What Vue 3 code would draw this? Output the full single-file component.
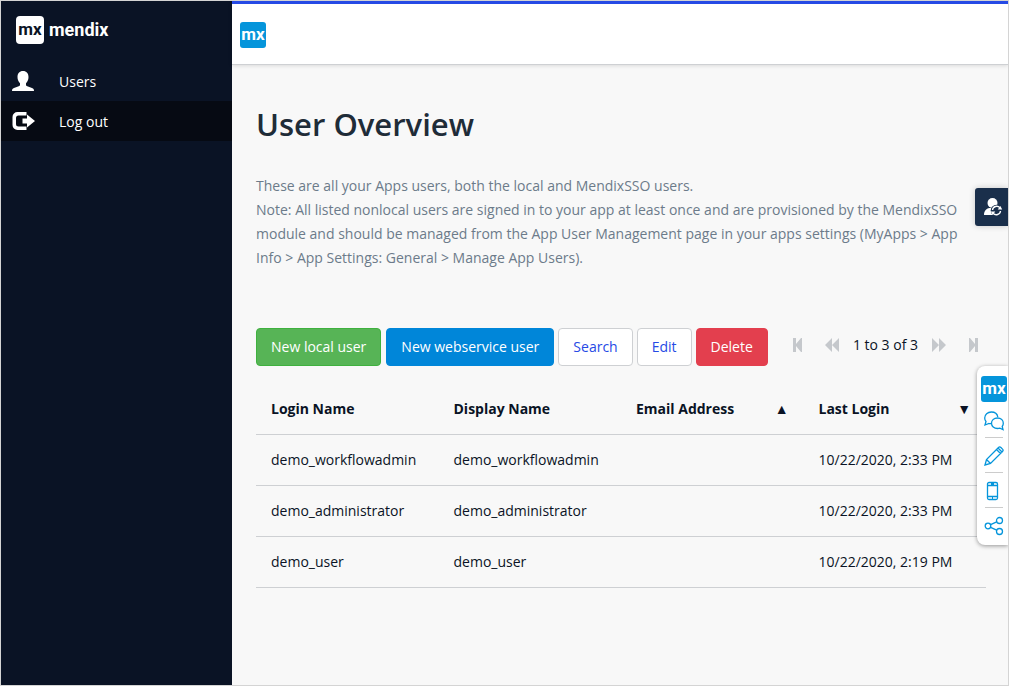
<script setup>
const columns = [
  { label: 'Login Name', sort: '' },
  { label: 'Display Name', sort: '' },
  { label: 'Email Address', sort: '▲' },
  { label: 'Last Login', sort: '▼' },
]
const users = [
  { login: 'demo_workflowadmin', name: 'demo_workflowadmin', email: '', last: '10/22/2020, 2:33 PM' },
  { login: 'demo_administrator', name: 'demo_administrator', email: '', last: '10/22/2020, 2:33 PM' },
  { login: 'demo_user', name: 'demo_user', email: '', last: '10/22/2020, 2:19 PM' },
]
</script>

<template>
  <div class="app">
    <aside class="sidebar">
      <div class="brand">
        <span class="brand-mark">mx</span>
        <span class="brand-name">mendix</span>
      </div>
      <nav>
        <a class="nav-item" href="#users">
          <svg width="22" height="20" viewBox="0 0 22 20" fill="#fff"><path d="M11 0C7.500 0 5.500 2.400 5.500 6c0 2.700 1 4.800 2.500 6.200v1.600c0 .8-.5 1.200-1.300 1.500L2 17c-1.400.5-2 1.200-2 3h22c0-1.800-.6-2.500-2-3l-4.700-1.700c-.8-.3-1.300-.7-1.300-1.500v-1.600c1.500-1.400 2.500-3.500 2.500-6.200 0-3.600-2-6-5.500-6z" /></svg>
          <span>Users</span>
        </a>
        <a class="nav-item active" href="#logout">
          <svg width="24" height="20" viewBox="0 0 24 20" fill="#fff"><path d="M14.500 1H5.500A5 5 0 0 0 .5 6v8a5 5 0 0 0 5 5h9v-3.500H6.500A2.500 2.500 0 0 1 4 13V7a2.500 2.500 0 0 1 2.500-2.500h8z" /><path d="M10.500 7.500H15V3.500L23 10l-8 6.500v-4h-4.500z" /></svg>
          <span>Log out</span>
        </a>
      </nav>
    </aside>

    <div class="page">
      <header class="topbar"><span class="mx-logo">mx</span></header>
      <main class="content">
        <h1>User Overview</h1>
        <p class="intro">
          These are all your Apps users, both the local and MendixSSO users.<br />
          Note: All listed nonlocal users are signed in to your app at least once and are provisioned by the MendixSSO
          module and should be managed from the App User Management page in your apps settings (MyApps &gt; App Info &gt;
          App Settings: General &gt; Manage App Users).
        </p>
        <div class="toolbar">
          <div class="actions">
            <button class="btn success">New local user</button>
            <button class="btn primary">New webservice user</button>
            <button class="btn">Search</button>
            <button class="btn">Edit</button>
            <button class="btn danger">Delete</button>
          </div>
          <div class="pager">
            <button aria-label="First page"><svg width="14" height="14" viewBox="0 0 14 14"><path d="M2 0h3v6l5-6h1v14h-1L5 8v6H2z" /></svg></button>
            <button aria-label="Previous page"><svg width="14" height="14" viewBox="0 0 14 14"><path d="M0 7l7-7v14zM7 7l7-7v14z" /></svg></button>
            <span>1 to 3 of 3</span>
            <button aria-label="Next page"><svg width="14" height="14" viewBox="0 0 14 14"><path d="M14 7L7 0v14zM7 7L0 0v14z" /></svg></button>
            <button aria-label="Last page"><svg width="14" height="14" viewBox="0 0 14 14"><path d="M12 0H9v6L4 0H3v14h1l5-6v6h3z" /></svg></button>
          </div>
        </div>
        <table>
          <thead>
            <tr>
              <th v-for="c in columns" :key="c.label" scope="col">
                <div class="head"><span>{{ c.label }}</span><span v-if="c.sort">{{ c.sort }}</span></div>
              </th>
            </tr>
          </thead>
          <tbody>
            <tr v-for="u in users" :key="u.login">
              <td>{{ u.login }}</td>
              <td>{{ u.name }}</td>
              <td>{{ u.email }}</td>
              <td>{{ u.last }}</td>
            </tr>
          </tbody>
        </table>
      </main>
    </div>

    <button class="switcher" aria-label="Switch user">
      <svg width="20" height="18" viewBox="0 0 20 18">
        <circle cx="8.500" cy="5" r="5" fill="#fff" />
        <path d="M0 17c0-4 2-6.500 5.500-7h5L13 17z" fill="#fff" />
        <circle cx="12.500" cy="12.500" r="5.800" fill="#1a2f4b" />
        <path d="M8.500 12a4.200 4.200 0 0 1 7.400-2.200M16.500 13a4.200 4.200 0 0 1-7.400 2.200" fill="none" stroke="#fff" stroke-width="1.400" />
        <path d="M13.700 11.500h4.500l-1.800-3.500zM11.300 13.500H6.800l1.800 3.500z" fill="#fff" />
      </svg>
    </button>

    <aside class="tools">
      <span class="mx-logo">mx</span>
      <button aria-label="Feedback">
        <svg width="20" height="20" viewBox="0 0 20 20"><path d="M7.500 12.500c-.8.200-1.800.2-2.500 0L1 14l1-3.500A5.500 5.500 0 0 1 .7 7C.7 3.500 3.600 1 7.300 1c3.400 0 6 2 6.500 5" /><path d="M13.500 7C10 7 7.500 9.300 7.500 12.200s2.500 5.300 6 5.300c.9 0 1.700-.1 2.400-.4L19 18.500l-.8-3c.7-.9 1.100-2 1.100-3.200C19.300 9.300 17 7 13.500 7z" /></svg>
      </button>
      <button aria-label="Edit app">
        <svg width="20" height="20" viewBox="0 0 20 20"><path d="M1 19l1.500-5.500L14.500 1.500c.8-.8 1.600-.8 2.400 0l1.600 1.600c.8.800.8 1.600 0 2.400L6.500 17.500zM2.500 13.500l4 4M12.500 3.500l4 4M14 2l4 4" /></svg>
      </button>
      <button aria-label="View on phone">
        <svg width="20" height="20" viewBox="0 0 20 20"><path d="M5 1.500h7a1.500 1.500 0 0 1 1.500 1.500v14a1.500 1.500 0 0 1-1.500 1.500H5A1.500 1.500 0 0 1 3.500 17V3A1.500 1.500 0 0 1 5 1.500zM3.500 4.500h10M3.500 15.500h10M7 3h3M8 17h1" /></svg>
      </button>
      <button aria-label="Share">
        <svg width="20" height="20" viewBox="0 0 20 20"><circle cx="4" cy="10" r="2.800" /><circle cx="15.500" cy="4.500" r="3" /><circle cx="15.500" cy="15.500" r="3" /><path d="M6.600 8.700l6.100-2.900M6.600 11.300l6.100 2.900" /></svg>
      </button>
    </aside>
  </div>
</template>

<style>
body {
  margin: 0;
}
</style>

<style scoped>
* {
  box-sizing: border-box;
}
.app {
  position: relative;
  display: flex;
  min-height: 100vh;
  border: 1px solid #d4d4d4;
  background: #f8f8f8;
  overflow: hidden;
  font: 14px/24px 'Open Sans', sans-serif;
  color: #0a1325;
}
button {
  font: inherit;
  cursor: pointer;
}
.sidebar {
  flex: 0 0 231px;
  background: #0a1325;
  color: #fff;
}
.brand {
  display: flex;
  align-items: center;
  gap: 5px;
  height: 60px;
  padding: 0 0 2px 15px;
  font-family: Roboto, sans-serif;
  font-weight: 700;
  font-size: 18px;
}
.brand-mark {
  width: 28px;
  height: 28px;
  border-radius: 4px;
  background: #fff;
  color: #0a1325;
  font-size: 17px;
  text-align: center;
  line-height: 26px;
}
.brand-name {
  line-height: 26px;
}
.nav-item {
  display: flex;
  align-items: center;
  height: 40px;
  padding-left: 11px;
  color: #fff;
  text-decoration: none;
}
.nav-item svg {
  margin-right: auto;
}
.nav-item span {
  width: 173px;
  padding-top: 2px;
}
.nav-item.active {
  background: #060a13;
}
.page {
  flex: 1;
  min-width: 0;
}
.topbar {
  display: flex;
  align-items: center;
  height: 64px;
  padding: 2px 0 0 8px;
  border-top: 3px solid #264ae5;
  border-bottom: 1px solid #ced0d3;
  background: #fff;
  box-shadow: 0 1px 4px rgba(0, 0, 0, 0.12);
}
.mx-logo {
  width: 26px;
  height: 26px;
  border-radius: 3px;
  background: #0595db;
  color: #fff;
  font: 700 17px/24px Roboto, sans-serif;
  text-align: center;
}
.content {
  padding: 39px 22px 0 24px;
}
h1 {
  margin: 0;
  color: #1f2c38;
  font-size: 31px;
  line-height: 40px;
  font-weight: 600;
}
.intro {
  margin: 30px 0 58px;
  color: #6c7b8a;
}
.toolbar {
  display: flex;
  justify-content: space-between;
  align-items: flex-start;
}
.actions {
  display: flex;
  gap: 4px;
}
.btn {
  height: 38px;
  padding: 0 14px;
  border: 1px solid #ced0d3;
  border-radius: 4px;
  background: #fff;
  color: #264ae5;
  white-space: nowrap;
}
.success {
  margin-right: 1px;
  border-color: #3fb13f;
  background: #57b456;
  color: #fff;
}
.primary {
  border-color: #0086d9;
  background: #0086d9;
  color: #fff;
}
.danger {
  border-color: #e33f4e;
  background: #e33f4e;
  color: #fff;
}
.pager {
  display: flex;
  align-items: center;
  gap: 20px;
  height: 34px;
  padding-right: 6px;
  white-space: nowrap;
}
.pager span {
  margin: 0 -6px;
}
.pager button {
  display: flex;
  padding: 0;
  border: 0;
  background: none;
}
.pager path {
  fill: #c5c8cc;
}
table {
  width: 100%;
  margin-top: 17px;
  border-collapse: collapse;
  table-layout: fixed;
}
th,
td {
  height: 51px;
  padding: 0 15px;
  border-bottom: 1px solid #ced0d3;
  text-align: left;
  white-space: nowrap;
}
th {
  padding-top: 1px;
  font-weight: 700;
}
.head {
  display: flex;
  justify-content: space-between;
}
.switcher {
  position: absolute;
  right: 0;
  top: 187px;
  display: flex;
  align-items: center;
  width: 33px;
  height: 38px;
  padding: 0 0 0 9px;
  border: 0;
  border-radius: 3px 0 0 3px;
  background: #1a2f4b;
  box-shadow: 0 0 6px rgba(0, 0, 0, 0.2);
}
.tools {
  position: absolute;
  right: 0;
  top: 365px;
  display: flex;
  flex-direction: column;
  align-items: center;
  width: 31px;
  padding: 10px 0 3px 3px;
  border-radius: 8px 0 0 8px;
  background: #fff;
  box-shadow: 0 1px 4px rgba(0, 0, 0, 0.4);
}
.tools button {
  display: flex;
  align-items: center;
  justify-content: center;
  width: 18px;
  height: 35px;
  padding: 2px 0 0;
  border: 0;
  background: none;
}
.tools button + button {
  border-top: 1px solid #ccc;
}
.tools svg {
  flex: none;
  fill: none;
  stroke: #0595db;
  stroke-width: 1.300;
}
</style>
